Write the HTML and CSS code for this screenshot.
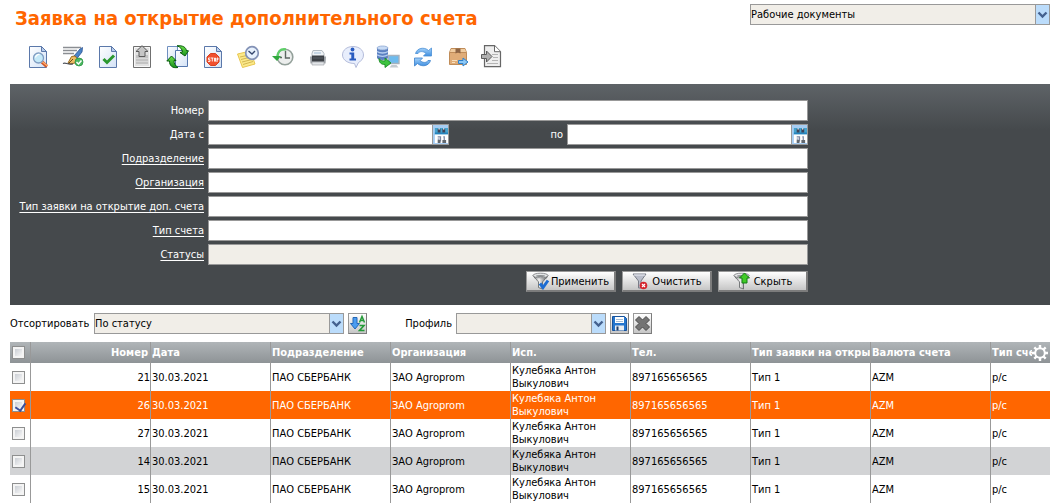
FILE: index.html
```html
<!DOCTYPE html>
<html lang="ru">
<head>
<meta charset="utf-8">
<meta name="viewport" content="width=device-width, initial-scale=1">
<title>Заявка на открытие дополнительного счета</title>
<link rel="stylesheet" href="styles.css">
</head>
<body>
<svg class="defs" width="0" height="0" aria-hidden="true">
  <defs>
    <linearGradient id="paper" x1="0" y1="0" x2="1" y2="1"><stop offset="0" stop-color="#fff"/><stop offset="1" stop-color="#d3e2f6"/></linearGradient>
    <linearGradient id="blue" x1="0" y1="0" x2="0" y2="1"><stop offset="0" stop-color="#a5d2fa"/><stop offset="1" stop-color="#3f8fe0"/></linearGradient>
    <linearGradient id="green" x1="0" y1="0" x2="0" y2="1"><stop offset="0" stop-color="#6ee04a"/><stop offset="1" stop-color="#17911b"/></linearGradient>
    <linearGradient id="steel" x1="0" y1="0" x2="1" y2="0"><stop offset="0" stop-color="#5f6265"/><stop offset=".4" stop-color="#f4f4f4"/><stop offset="1" stop-color="#4a4d50"/></linearGradient>
    <symbol id="doc" viewBox="0 0 24 24"><path d="M3.5 1.5h12l5 5v16h-17z" fill="url(#paper)" stroke="#5b78aa"/><path d="M15.500 1.500v5h5z" fill="#b9cdea" stroke="#5b78aa"/></symbol>
    <symbol id="chevron" viewBox="0 0 13 19"><path d="M2.500 7.500l4 4 4-4" fill="none" stroke="#44618f" stroke-width="2.400"/></symbol>
    <symbol id="calendar" viewBox="0 0 16 19"><path d="M2 2h14v7H2z" fill="#45a3cf"/><path d="M2 7h14v2H2z" fill="#2484bd"/><path d="M2 9h14v10H2z" fill="#fff"/><path d="M5 3h3v4H5zM10 3h3v4h-3z" fill="#3e4359"/><path d="M6 2h1v2H6zM11 2h1v2h-1z" fill="#fff"/><path d="M5 11.500h3v5M5 14h2M11 11.500h1v4" fill="none" stroke="#7c88a3" stroke-width="1.300"/><path d="M5 15h3v3H5zM10 15h4v3h-4z" fill="#62686f"/></symbol>
    <symbol id="funnel" viewBox="0 0 18 18"><path d="M1 3.500C4 8 6 8.500 6.500 10v5.500l4 1.500v-7c1-2 4-3 5.500-6.500z" fill="url(#steel)" stroke="#5b5e60" stroke-width=".8"/><ellipse cx="8.500" cy="3.500" rx="7.500" ry="2.300" fill="#e4e6e7" stroke="#77797b" stroke-width=".8"/><ellipse cx="8.500" cy="4" rx="4.500" ry="1" fill="#8c8f91"/></symbol>
  </defs>
</svg>

<header class="top">
  <h1 class="title">Заявка на открытие дополнительного счета</h1>
  <div class="select folder">
    <select aria-label="Папка документов"><option>Рабочие документы</option></select>
    <svg class="chevron"><use href="#chevron"/></svg>
  </div>
</header>

<nav class="toolbar" aria-label="Действия">
  <button class="tool" aria-label="Просмотр"><svg viewBox="0 0 24 24"><use href="#doc"/><path d="M16 17l5 4.500" stroke="#d0562a" stroke-width="3.400"/><path d="M16 16.500l5.500 4.500" stroke="#ffae6c" stroke-width="1.400"/><circle cx="12.500" cy="13" r="5" fill="#c5e9f8" stroke="#7f9dc2" stroke-width="1.300"/><path d="M9.500 12.500a3.500 3.500 0 0 1 4-3" stroke="#fff" stroke-width="1.300" fill="none"/></svg></button>
  <button class="tool" aria-label="Подписать"><svg viewBox="0 0 24 24"><path d="M2 2.500h18M2 5.500h14M2 8.500h11" stroke="#8b8e93" stroke-width="1.300"/><path d="M13 11l6-7 2.500-1.500-.500 4.500-5.500 7z" fill="#4a84c8" stroke="#2a5290" stroke-width=".8"/><path d="M7 18l3.500-6.500 3.500-.500 2.500 3-2.500 4-5 1z" fill="#edbb62" stroke="#9a6d22"/><path d="M7 19l5-5" stroke="#6d4b18"/><path d="M2 18.500c3-1.500 4 1.500 10 .500" fill="none" stroke="#4a4f58" stroke-width="1.200"/><circle cx="18" cy="17" r="4" fill="#4cb860" stroke="#2c9444" stroke-width=".8"/><path d="M15.500 17l2 2 3-3.500" fill="none" stroke="#fff" stroke-width="1.500"/></svg></button>
  <button class="tool" aria-label="Проверить"><svg viewBox="0 0 24 24"><use href="#doc"/><path d="M7.500 14l3.500 3.500 7-7" fill="none" stroke="#2b982f" stroke-width="3"/></svg></button>
  <button class="tool" aria-label="Отправить"><svg viewBox="0 0 24 24"><path d="M2.500 1.500h17v21h-17z" fill="#e2e2e2" stroke="#707070"/><path d="M3.500 2.500h15v19h-15z" fill="none" stroke="#f8f8f8"/><path d="M5 10h12v9H5z" fill="#c4c4c4"/><path d="M5 13.500h12M5 16.500h12" stroke="#d8d8d8"/><path d="M11 .700l6 5.800h-3v5H8v-5H5z" fill="#c6c6c6" stroke="#5a5a5a"/></svg></button>
  <button class="tool" aria-label="Обменять"><svg viewBox="0 0 24 24"><path d="M1.500 1.500h10v13h-10z" fill="url(#paper)" stroke="#6f8fc0"/><path d="M9.500 5.500h12v16h-12z" fill="url(#paper)" stroke="#5577ae"/><path d="M11 .800c6-.500 9 1.500 9.500 5h2l-3.500 5.200-5-3.500 2.500-.500c-.500-3-2-5-5.500-6.200z" fill="url(#green)" stroke="#075c0e"/><path d="M12 22.500c-6 1-8.500-2-8.500-6.500H.800L5.500 11l4.500 4.500H8c0 3 1 5 4 7z" fill="url(#green)" stroke="#075c0e"/></svg></button>
  <button class="tool" aria-label="Остановить"><svg viewBox="0 0 24 24"><use href="#doc"/><path d="M9.500 8.500h5l3.500 3.500v5l-3.500 3.500h-5L6 17v-5z" fill="#f0502f" stroke="#d8401f"/><path d="M9.500 13h-2v1.700h1.500v1.700H7M10 13h2.500M11.300 13v3.500M13.500 13h1v3.300h-1zM16 17v-4h1v1.700h-1" fill="none" stroke="#fff" stroke-width=".9"/></svg></button>
  <button class="tool" aria-label="Отложить"><svg viewBox="0 0 24 24"><path d="M1.500 9l13-3 4.500 13-12.500 3.500z" fill="#fbe98a" stroke="#e9c750"/><path d="M4 12l9-2M5 14.500l10-2.500M6 17l10-2.500M7 19.500l10-3" stroke="#cdb04c" stroke-width=".9"/><circle cx="16" cy="8" r="6.300" fill="#e7f1fd" stroke="#8392b6" stroke-width="1.700"/><path d="M12.500 6l3.500 3 3-3" fill="none" stroke="#34466d" stroke-width="1.400"/></svg></button>
  <button class="tool" aria-label="История"><svg viewBox="0 0 24 24"><circle cx="14" cy="12" r="7.800" fill="#eceeed" stroke="#93a09a" stroke-width="1.600"/><path d="M14.500 6v7H19M9 12.500h2" fill="none" stroke="#5c6661" stroke-width="1.400"/><path d="M15 4.500C9 3.500 6.500 7 6.500 12" fill="none" stroke="#5fcf69" stroke-width="2.400"/><path d="M1 11h9l-4 5z" fill="#31a83e"/></svg></button>
  <button class="tool" aria-label="Печать"><svg viewBox="0 0 24 24"><path d="M7 5.500h9l2 3v4H6v-4z" fill="#eef2f5" stroke="#b3bbc2"/><path d="M8 8h7" stroke="#9fbad4"/><path d="M4 11.500h16l-.500 7h-15z" fill="#9ba0a5"/><path d="M6 10.500h12v6H6z" fill="#3d4146"/><path d="M7 13h10" stroke="#5b6066"/><path d="M6 17h12v3H6z" fill="#e2e5e8" stroke="#a4a8ac" stroke-width=".7"/></svg></button>
  <button class="tool" aria-label="Информация"><svg viewBox="0 0 24 24"><path d="M12 1.500c6 0 10.500 3.500 10.500 8.500 0 4-2.500 6-5 7.500l-2.500 5-1.500-4C7 18.500 1.500 15 1.500 10c0-5 4.500-8.500 10.500-8.500z" fill="#e8eefc" stroke="#b4bcda"/><circle cx="11.500" cy="4.500" r="1.900" fill="#285bc0"/><path d="M8.500 7.500h4.700v6H15v2H8.500v-2h1.800v-4H8.500z" fill="#285bc0"/></svg></button>
  <button class="tool" aria-label="Выгрузить"><svg viewBox="0 0 24 24"><path d="M1 3v10c1 2.500 10 2.500 11 0V3z" fill="#5b80c2"/><path d="M1 6.500c3 2 8 2 11 0M1 9.800c3 2 8 2 11 0" fill="none" stroke="#b8cff0" stroke-width="1.300"/><ellipse cx="6.500" cy="3" rx="5.500" ry="2" fill="#c8dbf5" stroke="#7f9ccb" stroke-width=".7"/><path d="M12.500 10.500h10.500v8H12.500z" fill="#6dbbee" stroke="#a6b2be" stroke-width="1.400"/><path d="M15.500 20h5l2 2.500h-9z" fill="#c4cad0"/><path d="M3 13.500c1 2 3 2.500 6 2.500v-3l6 5-6 4.500v-3c-4 0-6-2-6-6z" fill="#3dc43f" stroke="#1c8a26" stroke-width=".9"/></svg></button>
  <button class="tool" aria-label="Обновить"><svg viewBox="0 0 24 24"><path d="M4.500 8.500C6 3 13 1.500 17.500 5.500L20.500 3v8h-8l2.500-2.700C12 6 8.500 6 7 8.500z" fill="url(#blue)" stroke="#4a8fd6" stroke-width=".8"/><path d="M19.500 15.500c-1.500 5.500-8.500 7-13 3L3.500 21v-8h8L9 15.700c3 2.300 6.500 2.300 8-.200z" fill="url(#blue)" stroke="#3a80cc" stroke-width=".8"/></svg></button>
  <button class="tool" aria-label="В архив"><svg viewBox="0 0 24 24"><path d="M5 3.500h14l1.500 4v12h-17v-12z" fill="#e0ac77" stroke="#c08c58"/><path d="M3.500 7.500h17" stroke="#c08c58"/><path d="M5 4h14l1 3H4z" fill="#f0cca0"/><path d="M9.500 3.500h5v5l-2.500-1-2.500 1z" fill="#8e6545"/><path d="M6 15.500h5M6 17.500h3" stroke="#f7dfbd"/><path d="M12.500 15.500h4.500V13l5 4-5 4v-2.500h-4.500z" fill="#8cc8f6" stroke="#2f80ca" stroke-width="1"/></svg></button>
  <button class="tool" aria-label="Импорт"><svg viewBox="0 0 24 24"><path d="M3.500.700h10l6 6v15h-16z" fill="#eee" stroke="#666" stroke-width="1.200"/><path d="M13.500.700v6h6" fill="#fff" stroke="#666"/><path d="M11 9.500h6M12 12.500h5M11 15.500h6M6 18.500h11" stroke="#b4b4b4"/><path d="M.500 9.500h5V6l5.500 5.500L5.500 17v-3.500h-5z" fill="#b0b0b0" stroke="#5c5c5c"/></svg></button>
</nav>

<main class="content">
  <form class="filter">
    <label class="label" for="number">Номер</label>
    <input class="field" id="number" type="text">

    <label class="label" for="from">Дата с</label>
    <div class="period">
      <div class="date"><input id="from" type="text"><button type="button" class="pick" aria-label="Выбрать дату начала"><svg viewBox="0 0 16 19"><use href="#calendar"/></svg></button></div>
      <label class="label" for="to">по</label>
      <div class="date"><input id="to" type="text"><button type="button" class="pick" aria-label="Выбрать дату окончания"><svg viewBox="0 0 16 19"><use href="#calendar"/></svg></button></div>
    </div>

    <label class="label" for="division"><a href="#division">Подразделение</a></label>
    <input class="field" id="division" type="text">

    <label class="label" for="org"><a href="#org">Организация</a></label>
    <input class="field" id="org" type="text">

    <label class="label" for="kind"><a href="#kind">Тип заявки на открытие доп. счета</a></label>
    <input class="field" id="kind" type="text">

    <label class="label" for="account"><a href="#account">Тип счета</a></label>
    <input class="field" id="account" type="text">

    <label class="label" for="status"><a href="#status">Статусы</a></label>
    <input class="field readonly" id="status" type="text" readonly>

    <div class="actions">
      <button type="button" class="action"><svg viewBox="0 0 18 18"><use href="#funnel"/><path d="M8 11.500l3 4 5-7" fill="none" stroke="#1c6cd2" stroke-width="3"/></svg>Применить</button>
      <button type="button" class="action wide"><svg viewBox="0 0 18 18"><path d="M2 2h13L10 9v7H7.500V9z" fill="#b9bdca" stroke="#797d88"/><path d="M3 3h11" stroke="#eef0f6"/><circle cx="12.500" cy="13.500" r="3.800" fill="#d5262e"/><path d="M11 12l3 3M14 12l-3 3" stroke="#fff" stroke-width="1.200"/></svg>Очистить</button>
      <button type="button" class="action wide"><svg viewBox="0 0 18 18"><use href="#funnel"/><path d="M11.500 1l5 5H14v5H9V6H6.500z" fill="#3fcb25" stroke="#147b16"/></svg>Скрыть</button>
    </div>
  </form>

  <div class="sorting">
    <label for="sort">Отсортировать</label>
    <div class="select sort">
      <select id="sort"><option>По статусу</option></select>
      <svg class="chevron"><use href="#chevron"/></svg>
    </div>
    <button class="square" aria-label="Порядок сортировки"><svg viewBox="0 0 17 19"><path d="M4 3.500h4v6h2.500l-4.500 5.500-4.500-5.500H4z" fill="#4a9cf0" stroke="#2467b5"/><path d="M10.500 8.500l2.500-6 2.500 6M11.500 6.500h3" fill="none" stroke="#249b38" stroke-width="1.500"/><path d="M10.500 11.500h4.500l-4.500 5h5" fill="none" stroke="#249b38" stroke-width="1.600"/></svg></button>
    <label class="profile-label" for="profile">Профиль</label>
    <div class="select profile">
      <select id="profile"><option></option></select>
      <svg class="chevron"><use href="#chevron"/></svg>
    </div>
    <button class="square" aria-label="Сохранить профиль"><svg viewBox="0 0 17 19"><path d="M1.500 2.500h12l2 2v12h-14z" fill="#2475cd" stroke="#17539c"/><path d="M4 3h9v6H4z" fill="#fff"/><path d="M5 5.500h7M5 7.500h7" stroke="#a8bed4"/><path d="M4 11.500h9v5H4z" fill="#e9edf1"/><path d="M5.500 12.500h2v4h-2z" fill="#223f68"/></svg></button>
    <button class="square" aria-label="Удалить профиль"><svg viewBox="0 0 17 19"><path d="M5 2.500l3.500 3.500L12 2.500l3.500 3.500-3.500 3.500 3.500 3.500-3.500 3.500L8.500 13 5 16.500 1.500 13 5 9.500 1.500 6z" fill="#747474" stroke="#4a4a4a" stroke-linejoin="round"/></svg></button>
  </div>

  <table class="grid">
    <colgroup><col class="col-check"><col class="col"><col class="col"><col class="col"><col class="col"><col class="col"><col class="col"><col class="col"><col class="col"><col></colgroup>
    <thead>
      <tr><th><input type="checkbox" aria-label="Выбрать все"></th><th class="num">Номер</th><th>Дата</th><th>Подразделение</th><th>Организация</th><th>Исп.</th><th>Тел.</th><th>Тип заявки на откры</th><th>Валюта счета</th><th class="last"><span class="clip">Тип сче</span><button class="gear" aria-label="Настройка столбцов"><svg viewBox="0 0 18 18"><circle cx="9" cy="9" r="4.800" fill="none" stroke="#fff" stroke-width="2"/><path d="M9 1v3M9 14v3M1 9h3M14 9h3M3.300 3.300l2.200 2.200M12.500 12.500l2.200 2.200M14.700 3.300l-2.200 2.200M5.500 12.500l-2.200 2.200" stroke="#fff" stroke-width="2.400"/></svg></button></th></tr>
    </thead>
    <tbody>
      <tr><td><input type="checkbox" aria-label="Заявка 21"></td><td class="num">21</td><td>30.03.2021</td><td>ПАО СБЕРБАНК</td><td>ЗАО Agroprom</td><td>Кулебяка Антон Выкулович</td><td>897165656565</td><td>Тип 1</td><td>AZM</td><td>р/с</td></tr>
      <tr class="selected"><td><input type="checkbox" aria-label="Заявка 26" checked></td><td class="num">26</td><td>30.03.2021</td><td>ПАО СБЕРБАНК</td><td>ЗАО Agroprom</td><td>Кулебяка Антон Выкулович</td><td>897165656565</td><td>Тип 1</td><td>AZM</td><td>р/с</td></tr>
      <tr><td><input type="checkbox" aria-label="Заявка 27"></td><td class="num">27</td><td>30.03.2021</td><td>ПАО СБЕРБАНК</td><td>ЗАО Agroprom</td><td>Кулебяка Антон Выкулович</td><td>897165656565</td><td>Тип 1</td><td>AZM</td><td>р/с</td></tr>
      <tr class="hover"><td><input type="checkbox" aria-label="Заявка 14"></td><td class="num">14</td><td>30.03.2021</td><td>ПАО СБЕРБАНК</td><td>ЗАО Agroprom</td><td>Кулебяка Антон Выкулович</td><td>897165656565</td><td>Тип 1</td><td>AZM</td><td>р/с</td></tr>
      <tr><td><input type="checkbox" aria-label="Заявка 15"></td><td class="num">15</td><td>30.03.2021</td><td>ПАО СБЕРБАНК</td><td>ЗАО Agroprom</td><td>Кулебяка Антон Выкулович</td><td>897165656565</td><td>Тип 1</td><td>AZM</td><td>р/с</td></tr>
    </tbody>
  </table>
</main>
</body>
</html>
```

FILE: styles.css
```css
* { box-sizing: border-box; }

body {
  margin: 0;
  background: #fff;
  color: #000;
  font: 11px/13px "DejaVu Sans Condensed", "DejaVu Sans", sans-serif;
}

button, input, select { font: inherit; color: inherit; margin: 0; }
button { padding: 0; cursor: pointer; }
svg { display: block; }
.defs { position: absolute; }

.top {
  display: flex;
  justify-content: space-between;
  align-items: flex-start;
  padding: 4px 0 0 15px;
}
.title {
  margin: 0;
  color: #f60;
  font: bold 20px/28px "DejaVu Sans Condensed", "DejaVu Sans", sans-serif;
  white-space: nowrap;
}

.select { position: relative; height: 21px; }
.select select {
  display: block;
  width: 100%;
  height: 21px;
  padding: 0 16px 0 0;
  border: 1px solid #999;
  border-radius: 0;
  background: #f1eee8;
  appearance: none;
}
.chevron {
  position: absolute;
  top: 1px;
  right: 1px;
  width: 14px;
  height: 19px;
  background: #bbdcfb;
  border-left: 1px solid #999;
  pointer-events: none;
}
.folder { width: 300px; }
.sort { width: 250px; }
.profile { width: 150px; }

.toolbar {
  display: flex;
  gap: 11px;
  padding: 13px 0 15px 26px;
}
.tool {
  width: 24px;
  height: 24px;
  border: 0;
  background: none;
}

.content { padding-left: 10px; }

.filter {
  display: grid;
  grid-template-columns: 194px minmax(0, 600px);
  column-gap: 4px;
  row-gap: 3px;
  padding: 16px 8px 13px 0;
  background: linear-gradient(#5e6367, #45494c 46px);
}
.label {
  color: #fff;
  line-height: 21px;
  text-align: right;
}
.label a { color: inherit; text-underline-offset: 2px; }
.field, .date {
  width: 100%;
  height: 21px;
  padding: 0 2px;
  border: 1px solid #999;
  border-radius: 0;
  background: #fff;
  color: #000;
}
.readonly { background: #f1eee8; }
.period {
  display: grid;
  grid-template-columns: 241fr 110fr 241fr;
  column-gap: 4px;
}
.date { display: flex; padding: 0; }
.date input {
  flex: 1;
  min-width: 0;
  border: 0;
  padding: 0 2px;
}
.pick {
  width: 16px;
  border: 0;
  border-left: 1px solid #999;
  background: #a6cdf3;
}
.actions {
  grid-column: 2;
  display: flex;
  justify-content: flex-end;
  gap: 6px;
  padding-top: 3px;
}
.action {
  display: flex;
  align-items: center;
  justify-content: center;
  gap: 1px;
  width: 90px;
  height: 21px;
  border: 1px solid #999;
  border-width: 1px 2px 2px 1px;
  border-color: #999 #7c7c7c #7c7c7c #999;
  background: linear-gradient(#fff, #c6c6c6);
  color: #000;
}
.action.wide { gap: 3px; }
.action svg { width: 18px; height: 18px; }

.sorting {
  display: flex;
  align-items: center;
  gap: 4px;
  padding: 8px 0;
}
.sorting label { width: 80px; white-space: nowrap; }
.sorting .profile-label { width: 81px; text-align: right; }
.square {
  width: 19px;
  height: 21px;
  border: 1px solid #999;
  border-color: #999 #7c7c7c #7c7c7c #999;
  background: linear-gradient(#fff, #c6c6c6);
}

.grid {
  width: 100%;
  table-layout: fixed;
  border-spacing: 0;
}
.col-check { width: 21px; }
.col { width: 120px; }
.grid th, .grid td {
  padding: 0 1px;
  border-right: 1px solid #999;
  text-align: left;
  vertical-align: middle;
  overflow: hidden;
}
.grid th {
  height: 21px;
  color: #fff;
  white-space: nowrap;
}
.grid td { height: 28px; }
.grid .num { text-align: right; padding-right: 2px; }
.grid td.num { padding-right: 0; }
.grid th:last-child, .grid td:last-child { border-right: 0; }
.grid thead { background: linear-gradient(#b0b5b8, #8e9396); }
.grid .selected { background: #f60; color: #fff; }
.grid .hover { background: #d2d3d5; }
.grid tbody { border-bottom: 1px solid #eee; }
.grid .last { position: relative; }
.clip {
  display: block;
  width: 40px;
  overflow: hidden;
}
.gear {
  position: absolute;
  top: 2px;
  right: 1px;
  width: 18px;
  height: 18px;
  border: 0;
  background: none;
}

.grid input {
  display: block;
  position: relative;
  width: 13px;
  height: 13px;
  margin-left: 1px;
  border: 1px solid #8e8f8f;
  background: linear-gradient(135deg, #cbcfd5, #f6f6f6) content-box, #f4f4f4;
  padding: 2px;
  appearance: none;
}
.grid input:checked::after {
  content: "";
  position: absolute;
  left: 4px;
  top: 1px;
  width: 5px;
  height: 8px;
  border: solid #3b4f9e;
  border-width: 0 2px 2px 0;
  transform: rotate(35deg);
}
```
